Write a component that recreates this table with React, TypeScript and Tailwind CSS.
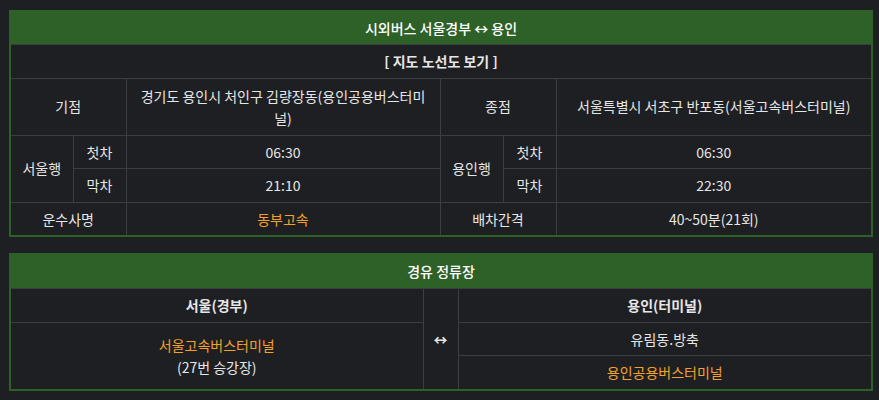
import React from "react";

const td = "border border-[#3d3e42] px-2 py-[6px] text-center align-middle leading-[20.5px]";
const head = "border-x-2 border-t-2 border-b border-x-[#2e6128] border-t-[#2e6128] border-b-[#3d3e42] bg-[#2e6128] px-2 py-[6px] text-center align-middle leading-[20px] font-medium text-white";
const orange = "text-[#f5a22c]";

export default function App() {
  return (
    <div
      className="min-h-[400px] w-full bg-[#1e1f22] pt-[10px] pl-[9px] text-[14px] text-[#e6e6e6]"
      style={{ fontFamily: '"Noto Sans CJK KR", "Noto Sans", sans-serif' }}
    >
      <table className="w-[862px] table-fixed border-collapse border-2 border-[#2e6128]">
        <colgroup>
          <col className="w-[63px]" />
          <col className="w-[53px]" />
          <col className="w-[314px]" />
          <col className="w-[63px]" />
          <col className="w-[53px]" />
          <col className="w-[316px]" />
        </colgroup>
        <tbody>
          <tr>
            <td colSpan={6} className={head}>
              시외버스 서울경부 ↔ 용인
            </td>
          </tr>
          <tr>
            <td colSpan={6} className={`${td} font-bold`}>
              [ 지도 노선도 보기 ]
            </td>
          </tr>
          <tr>
            <td colSpan={2} className={td}>기점</td>
            <td className={`${td} leading-[22px]`}>경기도 용인시 처인구 김량장동(용인공용버스터미널)</td>
            <td colSpan={2} className={td}>종점</td>
            <td className={td}>서울특별시 서초구 반포동(서울고속버스터미널)</td>
          </tr>
          <tr>
            <td rowSpan={2} className={td}>서울행</td>
            <td className={td}>첫차</td>
            <td className={td}>06:30</td>
            <td rowSpan={2} className={td}>용인행</td>
            <td className={td}>첫차</td>
            <td className={td}>06:30</td>
          </tr>
          <tr>
            <td className={td}>막차</td>
            <td className={td}>21:10</td>
            <td className={td}>막차</td>
            <td className={td}>22:30</td>
          </tr>
          <tr>
            <td colSpan={2} className={td}>운수사명</td>
            <td className={`${td} ${orange}`}>동부고속</td>
            <td colSpan={2} className={td}>배차간격</td>
            <td className={td}>40~50분(21회)</td>
          </tr>
        </tbody>
      </table>

      <table className="mt-4 w-[862px] table-fixed border-collapse border-2 border-[#2e6128]">
        <colgroup>
          <col className="w-[413px]" />
          <col className="w-[35px]" />
          <col className="w-[414px]" />
        </colgroup>
        <tbody>
          <tr>
            <td colSpan={3} className={`${head} leading-[21px]`}>
              경유 정류장
            </td>
          </tr>
          <tr>
            <td className={`${td} font-bold`}>서울(경부)</td>
            <td rowSpan={3} className={`${td} px-0 font-bold`}>↔</td>
            <td className={`${td} font-bold`}>용인(터미널)</td>
          </tr>
          <tr>
            <td rowSpan={2} className={`${td} py-[8px] leading-[22px]`}>
              <div className={orange}>서울고속버스터미널</div>
              <div>(27번 승강장)</div>
            </td>
            <td className={td}>유림동.방축</td>
          </tr>
          <tr>
            <td className={`${td} ${orange}`}>용인공용버스터미널</td>
          </tr>
        </tbody>
      </table>
    </div>
  );
}
